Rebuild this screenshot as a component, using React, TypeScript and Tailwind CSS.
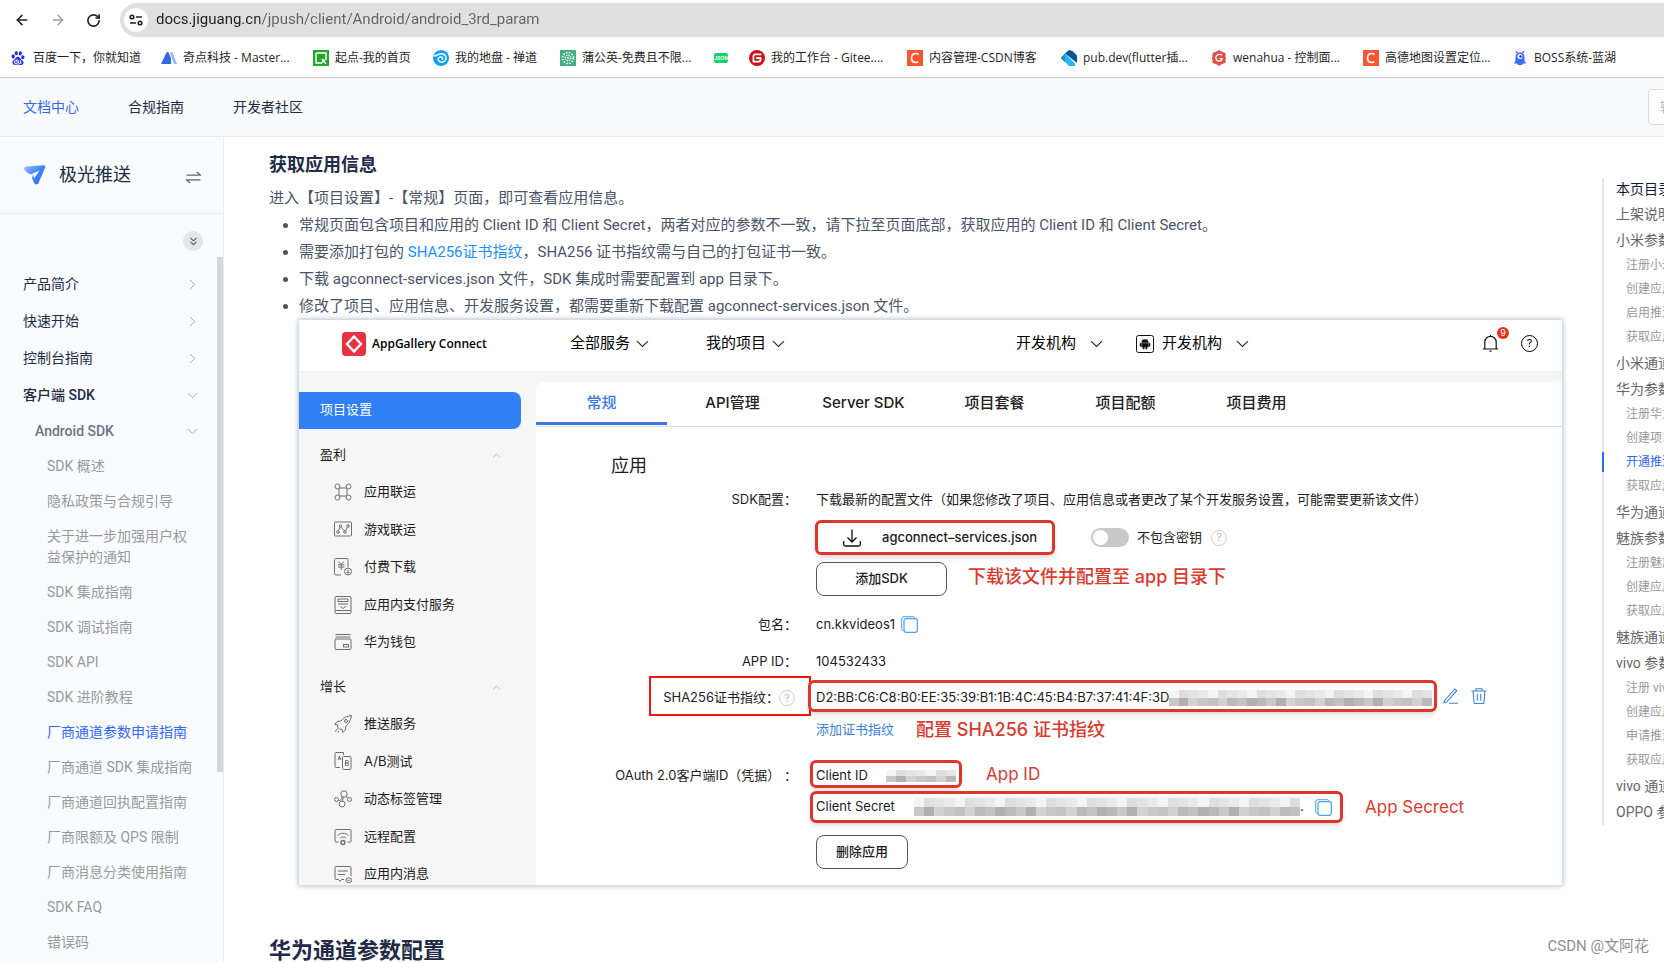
import React, { useState } from 'react';
import { ArrowLeft, ArrowRight, ChevronDown, ChevronRight, ChevronUp, ChevronsDown, RotateCw } from 'lucide-react';
import { SiBaidu, SiGitee } from 'react-icons/si';

const CsdnIcon = () => (
  <svg viewBox="0 0 16 16" className="w-4 h-4">
    <rect width="16" height="16" fill="#fc5531" />
    <path d="M11.6 4.6C10.8 3.8 9.700 3.500 8.600 3.500 6.200 3.500 4.600 5.400 4.600 8.100c0 2.700 1.500 4.400 3.800 4.400 1.200 0 2.200-.3 3-.9" fill="none" stroke="#fff" strokeWidth="1.700" />
  </svg>
);

const bookmarks = [
  { title: '百度一下，你就知道', width: 'w-[150px]', icon: <SiBaidu className="w-3.5 h-3.5 text-[#2932e1]" /> },
  {
    title: '奇点科技 - Master...',
    width: 'w-[152px]',
    icon: (
      <svg viewBox="0 0 16 16" className="w-4 h-4">
        <path d="M0 14 5.500 2.500c.5-.8 1.500-.8 2 0L10 8v6z" fill="#2f6be0" />
        <path d="M9 2.500h2.500L16 14h-3z" fill="#8fb6f5" />
      </svg>
    ),
  },
  {
    title: '起点-我的首页',
    width: 'w-[120px]',
    icon: (
      <svg viewBox="0 0 16 16" className="w-4 h-4">
        <rect width="16" height="16" fill="#22a52a" />
        <path d="M3 3h10v7M3 3v10h6" fill="none" stroke="#fff" strokeWidth="1.400" />
        <path d="m8.500 8.500 4.500 1.700-1.700.9 2.400 2.400-1 1-2.400-2.400-.8 1.600z" fill="#fff" />
      </svg>
    ),
  },
  {
    title: '我的地盘 - 禅道',
    width: 'w-[127px]',
    icon: (
      <svg viewBox="0 0 16 16" className="w-4 h-4">
        <circle cx="8" cy="8" r="8" fill="#12a0f5" />
        <path d="M.8 5.500c3 1.800 4.200-2.300 8-1.800s5.200 3.500 3.700 6.300-5.800 2.800-7 .5 1-4 2.900-3.500 1.500 2.200.3 2.500" fill="none" stroke="#fff" strokeWidth="1.500" />
      </svg>
    ),
  },
  {
    title: '蒲公英-免费且不限...',
    width: 'w-[153px]',
    icon: (
      <svg viewBox="0 0 16 16" className="w-4 h-4">
        <rect width="16" height="16" fill="#43b083" />
        <circle cx="8" cy="8" r="5.500" fill="none" stroke="#fff" strokeWidth="1.600" strokeDasharray="1.500 1.400" />
        <circle cx="8" cy="8" r="2.800" fill="none" stroke="#fff" strokeWidth="1.400" strokeDasharray="1.200 1" />
        <circle cx="8" cy="8" r="1" fill="#fff" />
      </svg>
    ),
  },
  {
    title: '',
    width: 'w-9',
    icon: (
      <svg viewBox="0 0 16 16" className="w-4 h-4">
        <rect x="1" y="3" width="14" height="10" rx="2" fill="#17cf6e" />
        <text x="8" y="10" textAnchor="middle" fontSize="5" fontWeight="700" fontStyle="italic" fill="#fff" fontFamily="Liberation Sans, sans-serif">JSON</text>
      </svg>
    ),
  },
  { title: '我的工作台 - Gitee....', width: 'w-[158px]', icon: <SiGitee className="w-4 h-4 text-[#d0111b]" /> },
  { title: '内容管理-CSDN博客', width: 'w-[154px]', icon: <CsdnIcon /> },
  {
    title: 'pub.dev(flutter插...',
    width: 'w-[150px]',
    icon: (
      <svg viewBox="0 0 16 16" className="w-4 h-4">
        <path d="M0 8 4 3.500V12z" fill="#0a4f8c" />
        <path d="M4 3.500 8 0l3.500 1L16 5.500V13z" fill="#0b5394" />
        <path d="M4 3.500 14 13.500V16H8L4 12z" fill="#29b6f6" />
        <path d="M0 8 4 3.500V12l4 4z" fill="#1b8fd6" />
      </svg>
    ),
  },
  {
    title: 'wenahua - 控制面...',
    width: 'w-[152px]',
    icon: (
      <svg viewBox="0 0 16 16" className="w-4 h-4">
        <path d="m8 0 2.500 1.500L14.500 3v4l.8 1-.8 1.500V13l-4 1.300L8 16l-2.500-1.700-4-1.300V9.500L.7 8l.8-1V3l4-1.500z" fill="#dd5349" />
        <path d="M11 5.300C9.500 4 6.500 4 5.300 6c-1.200 2 0 5 2.700 5.200 2 .1 3-1 3-2.500H8.500" fill="none" stroke="#fff" strokeWidth="1.300" />
      </svg>
    ),
  },
  { title: '高德地图设置定位...', width: 'w-[149px]', icon: <CsdnIcon /> },
  {
    title: 'BOSS系统-蓝湖',
    width: 'w-[120px]',
    icon: (
      <svg viewBox="0 0 16 16" className="w-4 h-4">
        <path d="M4 1.500 5.500 3M12 1.500 10.500 3" stroke="#3a6bff" strokeWidth="1.500" />
        <path d="M3.500 7a4.500 4.500 0 0 1 9 0v3.500l1.500 3h-3L10 15H6l-1-1.500H2l1.500-3z" fill="#3a6bff" />
        <circle cx="8" cy="6.500" r="2.500" fill="#fff" />
        <circle cx="8.500" cy="6.500" r="1.200" fill="#1b2b6b" />
      </svg>
    ),
  },
];

const topSections = ['产品简介', '快速开始', '控制台指南'];

const sdkPages = [
  'SDK 概述',
  '隐私政策与合规引导',
  '关于进一步加强用户权益保护的通知',
  'SDK 集成指南',
  'SDK 调试指南',
  'SDK API',
  'SDK 进阶教程',
  '厂商通道参数申请指南',
  '厂商通道 SDK 集成指南',
  '厂商通道回执配置指南',
  '厂商限额及 QPS 限制',
  '厂商消息分类使用指南',
  'SDK FAQ',
  '错误码',
];

const toc = [
  { title: '上架说明', children: [] },
  { title: '小米参数', children: ['注册小米', '创建应用', '启用推送', '获取应用'] },
  { title: '小米通道', children: [] },
  { title: '华为参数', children: ['注册华为', '创建项目', '开通推送', '获取应用'] },
  { title: '华为通道', children: [] },
  { title: '魅族参数', children: ['注册魅族', '创建应用', '获取应用'] },
  { title: '魅族通道', children: [] },
  { title: 'vivo 参数', children: ['注册 vivo', '创建应用', '申请推送', '获取应用'] },
  { title: 'vivo 通道', children: [] },
  { title: 'OPPO 参数', children: [] },
];

const Glyph: React.FC<{ children: React.ReactNode }> = ({ children }) => (
  <svg viewBox="0 0 18 18" className="w-[18px] h-[18px] shrink-0" fill="none" stroke="#6f6f6f" strokeWidth="1">
    {children}
  </svg>
);

const menuGroups = [
  {
    title: '盈利',
    items: [
      {
        label: '应用联运',
        icon: (
          <Glyph>
            <circle cx="3.500" cy="3.500" r="2.500" />
            <circle cx="14.500" cy="3.500" r="2.500" />
            <circle cx="3.500" cy="14.500" r="2.500" />
            <circle cx="14.500" cy="14.500" r="2.500" />
            <path d="M5.500 5h7M5.500 13h7M5 5.500v7M13 5.500v7" />
          </Glyph>
        ),
      },
      {
        label: '游戏联运',
        icon: (
          <Glyph>
            <rect x=".5" y="2" width="17" height="14" rx="1" />
            <circle cx="4" cy="12" r="1.300" />
            <circle cx="6.500" cy="6" r="1.300" />
            <circle cx="11" cy="12" r="1.300" />
            <circle cx="14" cy="6" r="1.300" />
            <path d="M4.500 10.700 6 7.200M7 7.200l3.400 3.600M11.500 10.700l2-3.500" />
          </Glyph>
        ),
      },
      {
        label: '付费下载',
        icon: (
          <Glyph>
            <path d="M7 17H2a1.500 1.500 0 0 1-1.500-1.500v-14a1 1 0 0 1 1-1H13a1 1 0 0 1 1 1V9" />
            <path d="m4.500 3.500 2.700 3 2.700-3M4 6.800h6.500M4 9h6.500M7.200 6.500V12" />
            <circle cx="14" cy="13.500" r="3.500" />
            <path d="M14 11.500v3.800M12.500 14l1.500 1.500 1.500-1.500" />
          </Glyph>
        ),
      },
      {
        label: '应用内支付服务',
        icon: (
          <Glyph>
            <rect x="1" y=".5" width="16" height="17" rx="1" />
            <path d="M1 14.500h16M4 3h10v2.500H4zM4 8h10M6.500 10.500 9 12.500l3-2.500" />
          </Glyph>
        ),
      },
      {
        label: '华为钱包',
        icon: (
          <Glyph>
            <path d="M1.500 1.500h15M1.500 4h15" />
            <rect x="1" y="6" width="16" height="10.500" rx="1" />
            <rect x="9.500" y="11.500" width="5" height="2.500" />
          </Glyph>
        ),
      },
    ],
  },
  {
    title: '增长',
    items: [
      {
        label: '推送服务',
        icon: (
          <Glyph>
            <path d="M17.500.5c-4 .3-8 2-10.500 5.500L3 6.500.8 9.500l3 .5-.3 2 2.500 2.500 2-.3.8 3.300 2.700-2.700.3-3.800c3.500-2.500 5.200-6.500 5.700-10.500z" />
            <circle cx="12" cy="6" r="1.500" />
            <path d="M3.500 14 .8 16.700M5 16l-1.500 1.500" />
          </Glyph>
        ),
      },
      {
        label: 'A/B测试',
        icon: (
          <Glyph>
            <path d="M6 15.500H2a1 1 0 0 1-1-1v-13a1 1 0 0 1 1-1h7.500V3" />
            <rect x="8.500" y="4.500" width="8.500" height="13" rx="1" />
            <path d="M4 8 5.500 4 7 8M4.500 6.800h2M11.500 8.500v5h1.800a1.200 1.200 0 0 0 0-2.500h-1.800 1.600a1.200 1.200 0 0 0 0-2.500z" />
          </Glyph>
        ),
      },
      {
        label: '动态标签管理',
        icon: (
          <Glyph>
            <circle cx="10" cy="4" r="3.200" />
            <circle cx="2.500" cy="9.500" r="2" />
            <circle cx="15.500" cy="9.500" r="2" />
            <circle cx="8" cy="14" r="3" />
            <path d="M4.300 10.300c2 .5 2.700 0 4-3.500M12 6.500l2 1.700M8.500 11l.8-4" />
          </Glyph>
        ),
      },
      {
        label: '远程配置',
        icon: (
          <Glyph>
            <path d="M4.500 14H2a1 1 0 0 1-1-1V2.500a1 1 0 0 1 1-1h14a1 1 0 0 1 1 1V13a1 1 0 0 1-1 1h-2.500" />
            <path d="M3.500 7.500c3-3 8-3 11 0M6 10.200c1.800-1.700 4.200-1.700 6 0" />
            <circle cx="9" cy="14.500" r="2" strokeWidth="1.400" />
          </Glyph>
        ),
      },
      {
        label: '应用内消息',
        icon: (
          <Glyph>
            <path d="M10 14.500H7.500L6 16.500l-1.500-2H2a1 1 0 0 1-1-1v-11a1 1 0 0 1 1-1h14a1 1 0 0 1 1 1v8.500M4 6h10M4 9.500h7" />
            <rect x="12" y="13" width="5.500" height="4.500" rx="2" />
            <path d="M13.500 15.300h2.500" />
          </Glyph>
        ),
      },
    ],
  },
];

const tabs = ['常规', 'API管理', 'Server SDK', '项目套餐', '项目配额', '项目费用'];

// Censored value: a light row of blocks over a darker one
const Mosaic: React.FC<{ columns: number; className: string }> = ({ columns, className }) => {
  const light = ['#f4f4f4', '#eaeaea', '#fafafa', '#e4e4e4', '#f0f0f0', '#dedede', '#f8f8f8'];
  const dark = ['#c8c8c8', '#bababa', '#d2d2d2', '#b0b0b0', '#c2c2c2'];
  return (
    <svg viewBox={`0 0 ${columns} 2`} preserveAspectRatio="none" shapeRendering="crispEdges" className={className} aria-hidden="true">
      {Array.from({ length: columns }, (_, i) => (
        <g key={i}>
          <rect x={i} y="0" width="1" height="1" fill={light[(i * 5 + (i >> 2)) % 7]} />
          <rect x={i} y="1" width="1" height="1" fill={dark[(i * 3 + (i >> 1)) % 5]} />
        </g>
      ))}
    </svg>
  );
};

const Chevron = () => (
  <svg viewBox="0 0 13 8" className="w-[13px] h-2" fill="none" stroke="#222" strokeWidth="1.100">
    <path d="m1 1.200 5.500 5.300L12 1.200" />
  </svg>
);

const CopyButton = () => (
  <button aria-label="复制" className="shrink-0">
    <svg viewBox="0 0 17 17" className="w-[17px] h-[17px] block" fill="none" stroke="#4c9fec">
      <path d="M2.500 14.500C1 14.500.7 13.500.7 12.500V3C.7 1.500 1.500.7 3 .7h9c1.200 0 2 .5 2 1.800" />
      <rect x="3" y="2.700" width="13.300" height="13.600" rx="2" strokeWidth="1.200" />
    </svg>
  </button>
);

const HelpMark = () => (
  <span className="w-4 h-4 shrink-0 rounded-full border border-[#cfcfcf] text-[#bdbdbd] text-[11px] leading-none flex items-center justify-center">?</span>
);

const AppGalleryConsole: React.FC = () => {
  const [activeTab, setActiveTab] = useState('常规');

  return (
    <div className="h-[565px] overflow-hidden bg-white text-[#1c1c1c] text-[13px] font-[Inter,'Noto_Sans_CJK_SC',sans-serif] flex flex-col">
      <div className="h-[52px] shrink-0 flex items-center pb-1 pl-[43px] pr-6 text-[15px] border-b border-[#efefef] text-black">
        <svg viewBox="0 0 24 24" className="w-6 h-6">
          <rect width="24" height="24" rx="4" fill="#e9323f" />
          <path d="m12 4.500 7 7.500-7 7.500-7-7.500z" fill="none" stroke="#fff" strokeWidth="2.400" />
        </svg>
        <span className="ml-1.5 text-xs font-semibold font-['Open_Sans',sans-serif] w-[198px]">AppGallery Connect</span>
        <button className="flex items-center gap-1.5 w-[136px]">
          全部服务 <Chevron />
        </button>
        <button className="flex items-center gap-1.5">
          我的项目 <Chevron />
        </button>
        <button className="ml-auto flex items-center gap-3.5 w-[120px]">
          开发机构 <Chevron />
        </button>
        <button className="flex items-center">
          <svg viewBox="0 0 18 18" className="w-[18px] h-[18px] mr-2" fill="none" stroke="#111">
            <rect x=".5" y=".5" width="17" height="17" rx="2" />
            <path d="M5.700 7.500a3.300 3 0 0 1 6.600 0zM5.700 8.300h6.600v3.700H5.700zM4 8.300h1v3H4zM13 8.300h1v3h-1zM7 12h1.200v2H7zM9.800 12H11v2H9.800zM6.500 3.800l.8 1.200M11.500 3.800 10.700 5" fill="#111" strokeWidth=".5" />
          </svg>
          <span className="mr-3.5">开发机构</span>
          <Chevron />
        </button>
        <button aria-label="通知" className="relative ml-[233px] mr-[22px]">
          <svg viewBox="0 0 17 17" className="w-[17px] h-[17px]" fill="none" stroke="#111" strokeWidth="1.200">
            <path d="M.8 14h15.400M2.800 14V7a5.700 5.700 0 0 1 11.400 0v7M7.500 16.200h2M8.500 1V0" />
          </svg>
          <span className="absolute -top-2 -right-2.5 w-3 h-3 rounded-full bg-[#e2311d] text-white text-[9px] leading-3 text-center">9</span>
        </button>
        <button aria-label="帮助" className="w-[17px] h-[17px] rounded-full border border-black text-[11px] leading-none flex items-center justify-center">?</button>
      </div>

      <div className="flex flex-1 min-h-0 bg-[#f6f6f6]">
        <div className="w-[237px] shrink-0 pt-5">
          <a href="#settings" className="flex items-center h-[37px] pl-[21px] pb-0.5 mr-[15px] rounded-r-lg bg-[#317ff5] text-white">项目设置</a>
          {menuGroups.map(group => (
            <div key={group.title} className="pt-2">
              <button className="w-full h-9 pl-[21px] pr-[33px] flex items-center justify-between">
                {group.title}
                <ChevronUp size={13} strokeWidth={1} className="text-[#888]" />
              </button>
              <ul className="h-[188px] grid">
                {group.items.map(item => (
                  <li key={item.label} className="flex">
                    <a href="#service" className="flex items-center gap-3 pl-[35px]">
                      {item.icon}
                      {item.label}
                    </a>
                  </li>
                ))}
              </ul>
            </div>
          ))}
        </div>

        <div className="flex-1 mt-[10px] bg-white rounded-tl-lg">
          <div className="h-[45px] flex border-b border-[#dcdcdc] text-[15px] font-medium text-[#222]">
            {tabs.map(tab => (
              <button
                key={tab}
                onClick={() => setActiveTab(tab)}
                className={`w-[131px] h-[43px] pt-0.5 border-b-3 ${activeTab === tab ? 'border-[#3579e6] text-[#3579e6]' : 'border-transparent'}`}
              >
                {tab}
              </button>
            ))}
          </div>

          <h2 className="mt-[21px] h-9 pl-[75px] text-lg leading-9">应用</h2>

          <div className="flex items-center gap-[19px] h-8">
            <span className="w-[261px] text-right">SDK配置：</span>
            <span>下载最新的配置文件（如果您修改了项目、应用信息或者更改了某个开发服务设置，可能需要更新该文件）</span>
          </div>
          <div className="mt-1 pl-[279px] flex items-center">
            <button className="h-[35px] w-[240px] flex items-center border-3 border-[#e0352b] rounded-md shadow-md pl-[25px] gap-[21px] font-medium">
              <svg viewBox="0 0 18 18" className="w-[18px] h-[18px]" fill="none" stroke="#111" strokeWidth="1.300">
                <path d="M9 .5V13M4.500 8.500 9 13l4.500-4.500M.7 12v3.500c0 1 .5 1.500 1.500 1.500h13.600c1 0 1.500-.5 1.500-1.500V12" />
              </svg>
              agconnect–services.json
            </button>
            <label className="ml-9 flex items-center gap-2">
              <input
                type="checkbox"
                className="appearance-none w-[38px] h-[19px] rounded-full bg-[#c9c9c9] p-0.5 before:block before:w-[15px] before:h-[15px] before:rounded-full before:bg-white checked:bg-[#317ff5] checked:before:ml-[19px]"
              />
              不包含密钥
            </label>
            <span className="ml-[9px]"><HelpMark /></span>
          </div>
          <div className="mt-[7px] pl-[280px] flex items-center gap-[21px]">
            <button className="w-[131px] h-[34px] border border-[#555] rounded-lg font-medium">添加SDK</button>
            <span className="text-lg leading-7 font-medium text-[#dc3a2d] pb-1">下载该文件并配置至 app 目录下</span>
          </div>

          <div className="mt-[10px] flex items-center gap-[19px] h-[37px]">
            <span className="w-[261px] text-right">包名：</span>
            <span className="flex items-center gap-1.5">cn.kkvideos1 <CopyButton /></span>
          </div>
          <div className="flex items-center gap-[19px] h-[37px]">
            <span className="w-[261px] text-right">APP ID：</span>
            <span>104532433</span>
          </div>
          <div className="flex items-center h-8">
            <div className="w-[275px] flex justify-end">
              <span className="h-10 pt-1 pl-3 pr-[14px] flex items-center border-2 border-[#f5120f]">
                SHA256证书指纹： <HelpMark />
              </span>
            </div>
            <div className="-ml-[3px] w-[629px] h-8 pt-1 pl-[5px] pr-0.5 flex items-center border-3 border-[#e0352b] rounded-md shadow-md">
              <span>D2:BB:C6:C8:B0:EE:35:39:B1:1B:4C:45:B4:B7:37:41:4F:3D</span>
              <Mosaic columns={27} className="flex-1 h-4" />
            </div>
            <button aria-label="编辑" className="ml-1.5">
              <svg viewBox="0 0 16 16" className="w-4 h-4" fill="none" stroke="#3f83e0" strokeWidth="1.100">
                <path d="M1.500 12.500 12 1l1.800 1.700L3.500 14l-2.500.8zM6 15.300h9" />
              </svg>
            </button>
            <button aria-label="删除" className="ml-3">
              <svg viewBox="0 0 16 16" className="w-4 h-4" fill="none" stroke="#3f83e0" strokeWidth="1.100">
                <path d="M.5 3h15M5 3V.7h6V3M2.200 3l.8 11.500c0 .7.400 1 1 1h8c.6 0 1-.3 1-1L13.800 3M6.300 6v6.500M9.700 6v6.500" />
              </svg>
            </button>
          </div>
          <div className="pl-[280px] h-9 flex items-center gap-[22px]">
            <a href="#add" className="text-[#3b7edc]">添加证书指纹</a>
            <span className="text-lg font-medium text-[#dc3a2d]">配置 SHA256 证书指纹</span>
          </div>

          <div className="mt-3 flex items-center">
            <span className="w-[261px] pt-1 text-right">OAuth 2.0客户端ID（凭据） ：</span>
            <div className="ml-[13px] w-[152px] h-7 pt-1 pl-[3px] pr-[3px] flex items-center justify-between border-3 border-[#e0352b] rounded-md shadow-md">
              Client ID
              <Mosaic columns={7} className="w-[70px] h-3" />
            </div>
            <span className="ml-6 text-[17px] leading-6 text-[#dc3a2d]">App ID</span>
          </div>
          <div className="mt-[3px] pl-[274px] flex items-center">
            <div className="w-[533px] h-8 pl-[3px] pr-2 flex items-center border-3 border-[#e0352b] rounded-md shadow-md">
              <span className="w-[98px]">Client Secret</span>
              <Mosaic columns={38} className="flex-1 h-[18px]" />
              <span className="w-[15px]">.</span>
              <CopyButton />
            </div>
            <span className="ml-[22px] text-[17px] leading-6 text-[#dc3a2d]">App Secrect</span>
          </div>
          <button className="mt-3 ml-[280px] w-[92px] h-[34px] border border-[#555] rounded-lg font-medium">删除应用</button>
        </div>
      </div>
    </div>
  );
};

const App: React.FC = () => {
  const [url, setUrl] = useState('docs.jiguang.cn/jpush/client/Android/android_3rd_param');

  return (
    <div className="relative h-screen flex flex-col overflow-hidden bg-white font-[Roboto,'Noto_Sans_CJK_SC',sans-serif] text-sm text-[#222b45]">
      {/* Browser toolbar */}
      <div className="h-10 shrink-0 flex items-center pl-[14px]">
        <button aria-label="后退" className="w-9"><ArrowLeft size={16} strokeWidth={2.4} className="text-[#222]" /></button>
        <button aria-label="前进" className="w-9"><ArrowRight size={16} strokeWidth={2.2} className="text-[#a0a0a0]" /></button>
        <button aria-label="刷新" className="w-[34px]"><RotateCw size={15} strokeWidth={2.6} className="text-[#222]" /></button>
        <div className="flex-1 h-[34px] flex items-center gap-2 pl-1 bg-[#e0e0e0] rounded-l-full">
          <span className="w-6 h-6 rounded-full bg-white flex items-center justify-center">
            <svg viewBox="0 0 14 12" className="w-3.5 h-3" fill="none" stroke="#222" strokeWidth="1.600">
              <circle cx="3" cy="3" r="1.800" />
              <path d="M7 3h6M1 9h6" />
              <circle cx="11" cy="9" r="1.800" />
            </svg>
          </span>
          <input
            aria-label="地址"
            value={url}
            onChange={e => setUrl(e.target.value)}
            className="flex-1 text-[15px] outline-none text-transparent bg-clip-text bg-linear-[90deg,#1f1f1f_104px,#5f6368_104px]"
          />
        </div>
      </div>

      <nav className="h-[38px] shrink-0 flex items-center pb-px pl-[11px] border-b border-[#c9c9c9] text-xs text-[#1f1f1f] whitespace-nowrap font-['Open_Sans','Noto_Sans_CJK_SC',sans-serif]">
        {bookmarks.map(b => (
          <a key={b.width + b.title} href="#bookmark" aria-label={b.title || 'JSON'} className={`flex items-center gap-1.5 shrink-0 ${b.width}`}>
            <span className="w-4">{b.icon}</span>
            {b.title}
          </a>
        ))}
      </nav>

      {/* Docs header */}
      <header className="h-[59px] shrink-0 flex items-center pl-[23px] bg-[#f9fafc] border-b border-[#e4e9f2]">
        <nav className="flex gap-[49px]">
          <a href="#docs" className="text-[#3366ff]">文档中心</a>
          <a href="#rules">合规指南</a>
          <a href="#community">开发者社区</a>
        </nav>
        <div className="ml-auto w-4">
          <input aria-label="搜索" placeholder="输入关键字" className="w-60 h-9 px-[11px] bg-white border border-[#d5d8dd] rounded placeholder:text-[#bbb]" />
        </div>
      </header>

      <div className="flex flex-1 min-h-0">
        <aside className="w-56 shrink-0 flex flex-col bg-[#f8fcff] border-r border-[#e9ecf2]">
          <div className="h-[77px] shrink-0 flex items-center pl-6 pr-[22px] border-b border-[#e4e9f2]">
            <svg viewBox="0 0 22 20" className="w-[22px] h-5">
              <defs>
                <linearGradient id="logo" x1="0" y1="0" x2="1" y2="1">
                  <stop offset="0" stopColor="#9cc6ff" />
                  <stop offset=".5" stopColor="#3f80ff" />
                  <stop offset="1" stopColor="#2f6bff" />
                </linearGradient>
              </defs>
              <path d="M2 1.500 19.500.3c1.500 0 2.200 1 1.700 2.200l-6.700 15.500c-.8 1.700-3 2-4 .5L8 13l1-3.500L5 9 1 5.500C-.5 4 .2 1.700 2 1.500z" fill="url(#logo)" />
              <path d="m6.500 9.500 9-4L10 13.500l-1-4z" fill="#f8fcff" />
            </svg>
            <h1 className="ml-[13px] text-lg leading-7">极光推送</h1>
            <button aria-label="切换产品" className="ml-auto">
              <svg viewBox="0 0 15 13" className="w-[15px] h-[13px] mt-1" fill="none" stroke="#5d6576" strokeWidth="1.300">
                <path d="M.5 4.200h14L10.800 1M14.500 8.800H.5L4.200 12" />
              </svg>
            </button>
          </div>
          <div className="h-[43px] shrink-0 flex items-end justify-end pr-5">
            <button aria-label="全部展开" className="mb-1.5 w-5 h-5 rounded-full bg-[#e1e5ec] text-[#5d6576] flex items-center justify-center">
              <ChevronsDown size={13} />
            </button>
          </div>
          <div className="flex flex-1 min-h-0">
            <nav className="flex-1 pt-[9px] overflow-hidden leading-[21px]">
              {topSections.map(title => (
                <a key={title} href="#section" className="flex items-center justify-between h-[37px] pl-[23px] pr-4">
                  {title}
                  <ChevronRight size={17} strokeWidth={1.2} className="text-[#8f9bb3]" />
                </a>
              ))}
              <a href="#client" className="flex items-center justify-between h-[37px] pl-[23px] pr-4 font-medium">
                客户端 SDK
                <ChevronDown size={17} strokeWidth={1.2} className="text-[#8f9bb3]" />
              </a>
              <a href="#android" className="flex items-center justify-between h-[35px] pl-[35px] pr-4 font-medium text-[#6b7385]">
                Android SDK
                <ChevronDown size={17} strokeWidth={1.2} className="text-[#8f9bb3]" />
              </a>
              {sdkPages.map(page => (
                <a
                  key={page}
                  href="#page"
                  className={`block py-[7px] pl-[47px] pr-6 ${page === '厂商通道参数申请指南' ? 'text-[#3366ff]' : 'text-[#999]'}`}
                >
                  {page}
                </a>
              ))}
            </nav>
            <div className="w-1.5 h-[515px] bg-[#d5d9dc]" />
          </div>
        </aside>

        <main className="flex-1 min-w-0 pl-[45px] pr-10 pt-[15px] text-[15px] leading-[27px] text-[#4a5468]">
          <h3 className="text-lg leading-[26px] font-bold text-[#222b45]">获取应用信息</h3>
          <p className="mt-[7px]">进入【项目设置】-【常规】页面，即可查看应用信息。</p>
          <ul className="list-disc pl-[30px]">
            <li>常规页面包含项目和应用的 Client ID 和 Client Secret，两者对应的参数不一致，请下拉至页面底部，获取应用的 Client ID 和 Client Secret。</li>
            <li>需要添加打包的 <a href="#sha" className="text-[#1890ff]">SHA256证书指纹</a>，SHA256 证书指纹需与自己的打包证书一致。</li>
            <li>下载 agconnect-services.json 文件，SDK 集成时需要配置到 app 目录下。</li>
            <li>修改了项目、应用信息、开发服务设置，都需要重新下载配置 agconnect-services.json 文件。</li>
          </ul>
          <div className="ml-[30px] leading-normal shadow-[0_0_5px_1px_#b9bdd0]">
            <AppGalleryConsole />
          </div>
          <h2 className="mt-[50px] text-[22px] leading-8 font-bold text-[#222b45]">华为通道参数配置</h2>
        </main>

        <aside className="w-[62px] shrink-0 pt-[41px] overflow-hidden whitespace-nowrap">
          <div className="border-l-2 border-[#dfe5f2] text-[#666]">
            <p className="h-[23px] pl-3 leading-[23px] text-[#111a3a]">本页目录</p>
            {toc.map(section => (
              <div key={section.title}>
                <a href="#toc" className="block h-[26px] leading-[26px] pl-3">{section.title}</a>
                {section.children.length > 0 && (
                  <div className="flex flex-col gap-1 pt-0.5 pb-[3px] -ml-0.5">
                    {section.children.map(child => (
                      <a
                        key={child}
                        href="#toc"
                        className={`flex items-center h-5 border-l-2 pl-[22px] text-xs ${child === '开通推送' ? 'border-[#3366ff] text-[#3366ff]' : 'border-transparent text-[#999]'}`}
                      >
                        {child}
                      </a>
                    ))}
                  </div>
                )}
              </div>
            ))}
          </div>
        </aside>
      </div>

      <span className="absolute right-[15px] bottom-1 text-[15px] leading-6 text-[#8f8f8f] pointer-events-none">CSDN @文阿花</span>
    </div>
  );
};

export default App;
